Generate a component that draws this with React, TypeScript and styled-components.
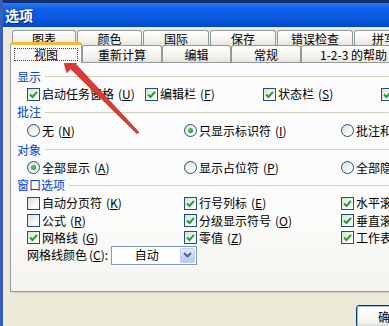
import styled, { createGlobalStyle } from "styled-components";

const GlobalStyle = createGlobalStyle`
  body {
    margin: 0;
    font-family: "Noto Sans CJK SC", "Noto Sans", sans-serif;
    font-size: 12px;
    line-height: 14px;
    color: #000;
  }
`;

type Opt = { label: string; key: string; checked?: boolean };

const topTabs = [
  { label: "图表", w: 64 },
  { label: "颜色", w: 65 },
  { label: "国际", w: 66 },
  { label: "保存", w: 66 },
  { label: "错误检查", w: 76 },
  { label: "拼写", w: 60 },
];

const frontTabs = [
  { label: "视图", w: 72, active: true },
  { label: "重新计算", w: 80 },
  { label: "编辑", w: 69 },
  { label: "常规", w: 70 },
  { label: "1-2-3 的帮助", w: 105 },
];

const showOpts: Opt[] = [
  { label: "启动任务窗格", key: "U", checked: true },
  { label: "编辑栏", key: "F", checked: true },
  { label: "状态栏", key: "S", checked: true },
  { label: "任务栏中的窗口", key: "W", checked: true },
];

const commentOpts: Opt[] = [
  { label: "无", key: "N" },
  { label: "只显示标识符", key: "I", checked: true },
  { label: "批注和标识符", key: "D" },
];

const objectOpts: Opt[] = [
  { label: "全部显示", key: "A", checked: true },
  { label: "显示占位符", key: "P" },
  { label: "全部隐藏", key: "D" },
];

const windowOpts: Opt[][] = [
  [
    { label: "自动分页符", key: "K" },
    { label: "行号列标", key: "E", checked: true },
    { label: "水平滚动条", key: "T", checked: true },
  ],
  [
    { label: "公式", key: "R" },
    { label: "分级显示符号", key: "O", checked: true },
    { label: "垂直滚动条", key: "V", checked: true },
  ],
  [
    { label: "网格线", key: "G", checked: true },
    { label: "零值", key: "Z", checked: true },
    { label: "工作表标签", key: "B", checked: true },
  ],
];

const Viewport = styled.div`
  position: relative;
  width: 389px;
  height: 326px;
  overflow: hidden;
  background: #ece9d8;
`;

const Window = styled.div`
  width: 505px;
  height: 100%;
  box-sizing: border-box;
  border-left: 3px solid #3a5fb8;
  background: #ece9d8;
`;

const TitleBar = styled.div`
  height: 27px;
  box-sizing: border-box;
  border-top: 3px solid #14306e;
  padding-left: 2px;
  display: flex;
  align-items: center;
  background: linear-gradient(#2f7cf0 0%, #0c5fe6 25%, #0a5ae2 60%, #0650d6 85%, #0446c4 100%);
  color: #fff;
  font-weight: bold;
  font-size: 14px;
  text-shadow: 1px 1px 0 #0b2a78;
`;

const Body = styled.div`
  padding: 3px 7px 0 7px;
`;

const TabRow = styled.div<{ $h: number; $indent: number }>`
  display: flex;
  align-items: flex-end;
  gap: ${(p) => (p.$indent ? 1 : 0)}px;
  height: ${(p) => p.$h}px;
  padding-left: ${(p) => p.$indent}px;
  position: relative;
  z-index: 1;
`;

const Tab = styled.div<{ $w: number; $h: number; $active?: boolean }>`
  width: ${(p) => p.$w}px;
  height: ${(p) => (p.$active ? p.$h + 4 : p.$h)}px;
  margin-bottom: ${(p) => (p.$active ? -1 : 0)}px;
  box-sizing: border-box;
  display: flex;
  align-items: center;
  justify-content: center;
  flex-shrink: 0;
  border: 1px solid #919b9c;
  border-bottom: none;
  border-top: ${(p) => (p.$active ? "3px solid #f9b935" : "1px solid #919b9c")};
  border-radius: 3px 3px 0 0;
  background: ${(p) =>
    p.$active ? "#fcfcfe" : "linear-gradient(#ffffff, #f4f3ee 60%, #e6e5de)"};
  position: relative;
  z-index: ${(p) => (p.$active ? 2 : 1)};
  white-space: nowrap;
  line-height: 13px;
`;

const FocusBox = styled.span`
  width: calc(100% - 6px);
  height: 13px;
  box-sizing: border-box;
  border: 1px dotted #444;
  display: flex;
  align-items: center;
  justify-content: center;
`;

const Panel = styled.div`
  height: 230px;
  box-sizing: border-box;
  border: 1px solid #919b9c;
  background: linear-gradient(#fcfcfe 0%, #fbfbf9 70%, #f4f3ee 100%);
  box-shadow: 1px 1px 0 #d6d3c6;
  padding: 5px 0 0 6px;
`;

const SectionTitle = styled.div<{ $h: number }>`
  display: flex;
  align-items: center;
  height: ${(p) => p.$h}px;
  color: #0046d5;

  &::after {
    content: "";
    flex: 1;
    height: 1px;
    margin: 0 8px 0 4px;
    background: #d0d0bf;
  }
`;

const OptionGrid = styled.div<{ $cols: number; $w: number; $h: number }>`
  display: grid;
  grid-template-columns: repeat(${(p) => p.$cols}, ${(p) => p.$w}px);
  align-items: center;
  height: ${(p) => p.$h}px;
  margin-left: 10px;
`;

const Option = styled.label`
  display: flex;
  align-items: center;
  gap: 2px;
  white-space: nowrap;
`;

const Box = styled.span<{ $round?: boolean }>`
  width: 13px;
  height: 13px;
  box-sizing: border-box;
  flex-shrink: 0;
  border: 1px solid #1c5180;
  border-radius: ${(p) => (p.$round ? "50%" : "0")};
  background: linear-gradient(135deg, #dcdcd7, #ffffff 80%);
  display: flex;
  align-items: center;
  justify-content: center;
`;

const Dot = styled.span`
  width: 5px;
  height: 5px;
  border-radius: 50%;
  background: radial-gradient(circle at 35% 35%, #5fcf5f, #1e7a1e);
`;

const Key = styled.span`
  margin-left: 2px;
`;

const SelectRow = styled.div<{ $h: number }>`
  display: flex;
  align-items: center;
  gap: 3px;
  height: ${(p) => p.$h}px;
  margin-left: 10px;
`;

const Select = styled.div`
  width: 86px;
  height: 19px;
  box-sizing: border-box;
  border: 1px solid #7f9db9;
  background: #fff;
  display: flex;
  padding: 1px;
`;

const SelectText = styled.span`
  flex: 1;
  display: flex;
  align-items: center;
  justify-content: center;
`;

const SelectButton = styled.span`
  width: 15px;
  box-sizing: border-box;
  border: 1px solid #bccdf5;
  border-radius: 2px;
  background: linear-gradient(#e0e9fd, #b6c9f5);
  display: flex;
  align-items: center;
  justify-content: center;
`;

const Footer = styled.div`
  display: flex;
  justify-content: flex-end;
  gap: 6px;
  padding-top: 13px;
`;

const Button = styled.div`
  width: 68px;
  height: 23px;
  box-sizing: border-box;
  border: 1px solid #003c74;
  border-radius: 3px;
  background: linear-gradient(#ffffff, #f3f3ef 80%, #d6d0c5);
  box-shadow: inset 0 0 0 1px #9fbbe8;
  display: flex;
  align-items: center;
  justify-content: center;
  flex-shrink: 0;
`;

const Overlay = styled.svg`
  position: absolute;
  left: 0;
  top: 0;
  pointer-events: none;
`;

const Check = () => (
  <svg width="9" height="9" viewBox="0 0 9 9">
    <path d="M1 4.5 L3.5 7 L8 1.8" fill="none" stroke="#21a121" strokeWidth="2" />
  </svg>
);

const Chevron = () => (
  <svg width="9" height="6" viewBox="0 0 9 6">
    <path d="M1 1 L4.5 4.5 L8 1" fill="none" stroke="#4d6185" strokeWidth="1.8" />
  </svg>
);

const OptionItem = ({ opt, radio }: { opt: Opt; radio?: boolean }) => (
  <Option>
    <Box $round={radio}>{opt.checked && (radio ? <Dot /> : <Check />)}</Box>
    {opt.label}
    <Key>
      (<u>{opt.key}</u>)
    </Key>
  </Option>
);

export default function App() {
  return (
    <>
      <GlobalStyle />
      <Viewport>
        <Window>
          <TitleBar>选项</TitleBar>
          <Body>
            <TabRow $h={15} $indent={2}>
              {topTabs.map((t) => (
                <Tab key={t.label} $w={t.w} $h={15}>
                  {t.label}
                </Tab>
              ))}
            </TabRow>
            <TabRow $h={17} $indent={0}>
              {frontTabs.map((t) => (
                <Tab key={t.label} $w={t.w} $h={17} $active={t.active}>
                  {t.active ? <FocusBox>{t.label}</FocusBox> : t.label}
                </Tab>
              ))}
            </TabRow>
            <Panel>
              <SectionTitle $h={17}>显示</SectionTitle>
              <OptionGrid $cols={4} $w={118} $h={18}>
                {showOpts.map((o) => (
                  <OptionItem key={o.label} opt={o} />
                ))}
              </OptionGrid>
              <SectionTitle $h={18}>批注</SectionTitle>
              <OptionGrid $cols={3} $w={157} $h={19}>
                {commentOpts.map((o) => (
                  <OptionItem key={o.label} opt={o} radio />
                ))}
              </OptionGrid>
              <SectionTitle $h={19}>对象</SectionTitle>
              <OptionGrid $cols={3} $w={157} $h={17}>
                {objectOpts.map((o) => (
                  <OptionItem key={o.label} opt={o} radio />
                ))}
              </OptionGrid>
              <SectionTitle $h={18}>窗口选项</SectionTitle>
              {windowOpts.map((row, i) => (
                <OptionGrid key={i} $cols={3} $w={157} $h={i === 0 ? 18 : 17}>
                  {row.map((o) => (
                    <OptionItem key={o.label} opt={o} />
                  ))}
                </OptionGrid>
              ))}
              <SelectRow $h={18}>
                <span>
                  网格线颜色<Key>(<u>C</u>):</Key>
                </span>
                <Select>
                  <SelectText>自动</SelectText>
                  <SelectButton>
                    <Chevron />
                  </SelectButton>
                </Select>
              </SelectRow>
            </Panel>
            <Footer>
              <Button>确定</Button>
              <Button>取消</Button>
            </Footer>
          </Body>
        </Window>
        <Overlay width="389" height="326" viewBox="0 0 389 326">
          <polygon
            points="62,55 79.6,60.2 75.7,64.1 138.9,132.2 137.1,133.8 70.7,68.9 66.8,72.8"
            fill="#dc3a32"
            stroke="#b82a24"
            strokeWidth="0.6"
            strokeLinejoin="round"
          />
        </Overlay>
      </Viewport>
    </>
  );
}
